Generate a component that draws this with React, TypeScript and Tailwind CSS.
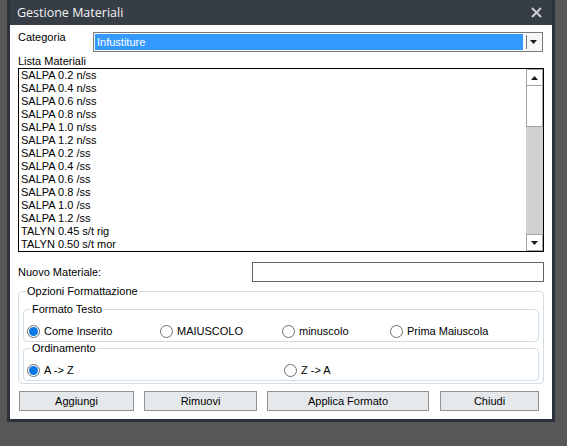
import React from "react";

const materiali = [
  "SALPA 0.2 n/ss",
  "SALPA 0.4 n/ss",
  "SALPA 0.6 n/ss",
  "SALPA 0.8 n/ss",
  "SALPA 1.0 n/ss",
  "SALPA 1.2 n/ss",
  "SALPA 0.2 /ss",
  "SALPA 0.4 /ss",
  "SALPA 0.6 /ss",
  "SALPA 0.8 /ss",
  "SALPA 1.0 /ss",
  "SALPA 1.2 /ss",
  "TALYN 0.45 s/t rig",
  "TALYN 0.50 s/t mor",
];

const Radio = ({ label, checked, className }: { label: string; checked?: boolean; className?: string }) => (
  <div className={`flex items-center gap-[4px] ${className ?? ""}`}>
    <span className="flex h-[13px] w-[13px] items-center justify-center rounded-full border border-[#6f6f6f] bg-white">
      {checked && <span className="h-[9px] w-[9px] rounded-full bg-[#0a78e6]" />}
    </span>
    <span>{label}</span>
  </div>
);

const Button = ({ label, className }: { label: string; className?: string }) => (
  <div
    className={`flex h-[20px] items-center justify-center border border-[#919191] bg-[#e6e9ec] ${className ?? ""}`}
  >
    {label}
  </div>
);

const Arrow = ({ up }: { up?: boolean }) => (
  <svg width="7" height="4" viewBox="0 0 7 4">
    <path d={up ? "M0 4 L3.5 0 L7 4 Z" : "M0 0 L7 0 L3.5 4 Z"} fill="#1a1a1a" />
  </svg>
);

export default function App() {
  return (
    <div className="h-[446px] w-[567px] overflow-hidden bg-[#575757] font-['Liberation_Sans',Arial,sans-serif] text-[11px] leading-[13px] text-black">
      {/* Window */}
      <div className="ml-[7px] w-[548px] bg-[#2d333b] px-[3px] pb-[3px]">
        {/* Title bar */}
        <div className="flex h-[25px] items-center justify-between bg-[#363d47] pl-[7px] pr-[10px]">
          <span className="font-['Open_Sans',sans-serif] text-[12.5px] text-[#f2f2f2]">Gestione Materiali</span>
          <svg width="11" height="11" viewBox="0 0 11 11">
            <path d="M1 1 L10 10 M10 1 L1 10" stroke="#c9cdd3" strokeWidth="2" />
          </svg>
        </div>

        {/* Body */}
        <div className="h-[394px] bg-white pl-[8px] pr-[8px]">
          {/* Categoria */}
          <div className="flex items-start">
            <span className="mt-[6px] w-[75px]">Categoria</span>
            <div className="mt-[7px] flex h-[20px] w-[450px] border border-[#7a7a7a] bg-[#f4f6f8] p-[1px]">
              <div className="flex flex-1 items-center bg-[#3399ff] pl-[2px] text-white">Infustiture</div>
              <div className="flex w-[18px] items-center">
                <span className="ml-[3px] h-[14px] w-px bg-[#7a7a7a]" />
                <span className="ml-[3px]">
                  <Arrow />
                </span>
              </div>
            </div>
          </div>

          {/* Lista */}
          <div className="mt-[3px] h-[13px]">Lista Materiali</div>
          <div className="flex h-[184px] w-[526px] border border-black">
            <div className="flex-1 overflow-hidden pl-[2px]">
              {materiali.map((m) => (
                <div key={m} className="h-[13px] whitespace-nowrap">
                  {m}
                </div>
              ))}
            </div>
            <div className="flex w-[17px] flex-col bg-[#cfd0d2]">
              <div className="flex h-[17px] items-center justify-center border border-[#a3a3a3] bg-white">
                <Arrow up />
              </div>
              <div className="h-[41px] border border-t-0 border-[#a3a3a3] bg-white" />
              <div className="flex-1" />
              <div className="flex h-[17px] items-center justify-center border border-[#a3a3a3] bg-white">
                <Arrow />
              </div>
            </div>
          </div>

          {/* Nuovo materiale */}
          <div className="mt-[10px] flex h-[20px] items-center justify-between">
            <span>Nuovo Materiale:</span>
            <div className="h-[20px] w-[292px] border border-[#646464] bg-white" />
          </div>

          {/* Opzioni */}
          <fieldset className="mt-[3px] w-[526px] rounded-[4px] border border-[#d3dde4] px-[4px] pb-[2px] pt-[5px]">
            <legend className="ml-[3px] px-[1px] leading-[13px]">Opzioni Formattazione</legend>
            <fieldset className="rounded-[4px] border border-[#d3dde4] px-[3px] pb-[1px] pt-[7px]">
              <legend className="ml-[4px] px-[1px] leading-[13px]">Formato Testo</legend>
              <div className="flex h-[17px] items-center">
                <Radio label="Come Inserito" checked className="w-[133px]" />
                <Radio label="MAIUSCOLO" className="w-[122px]" />
                <Radio label="minuscolo" className="w-[108px]" />
                <Radio label="Prima Maiuscola" />
              </div>
            </fieldset>
            <fieldset className="rounded-[4px] border border-[#d3dde4] px-[3px] pb-[1px] pt-[7px]">
              <legend className="ml-[4px] px-[1px] leading-[13px]">Ordinamento</legend>
              <div className="flex h-[17px] items-center">
                <Radio label="A -> Z" checked className="w-[257px]" />
                <Radio label="Z -> A" />
              </div>
            </fieldset>
          </fieldset>

          {/* Pulsanti */}
          <div className="mt-[7px] flex pl-[1px]">
            <Button label="Aggiungi" className="w-[115px]" />
            <Button label="Rimuovi" className="ml-[10px] w-[113px]" />
            <Button label="Applica Formato" className="ml-[10px] w-[162px]" />
            <Button label="Chiudi" className="ml-[11px] w-[99px]" />
          </div>
        </div>
      </div>
    </div>
  );
}
